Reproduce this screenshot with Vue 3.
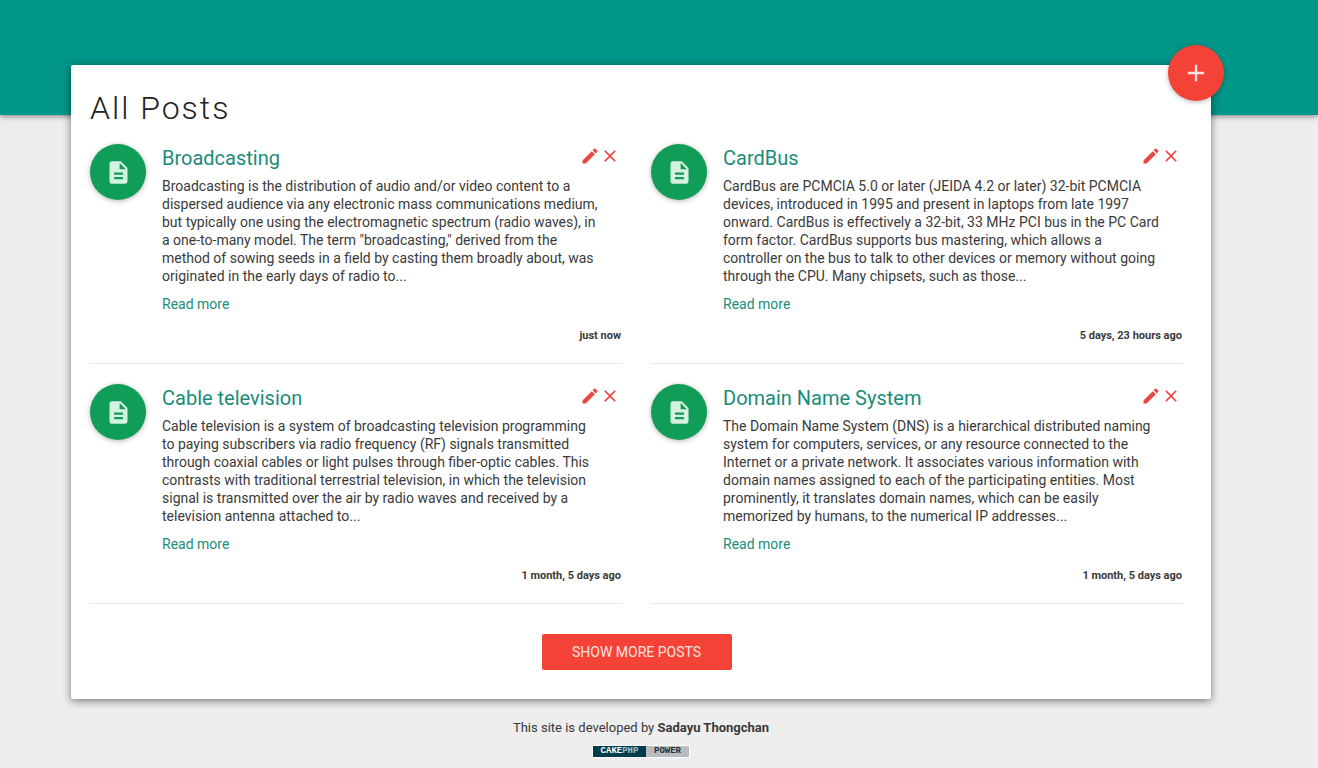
<script setup>
const posts = [
  {
    title: 'Broadcasting',
    body: 'Broadcasting is the distribution of audio and/or video content to a dispersed audience via any electronic mass communications medium, but typically one using the electromagnetic spectrum (radio waves), in a one-to-many model. The term "broadcasting," derived from the method of sowing seeds in a field by casting them broadly about, was originated in the early days of radio to...',
    time: 'just now',
  },
  {
    title: 'CardBus',
    body: 'CardBus are PCMCIA 5.0 or later (JEIDA 4.2 or later) 32-bit PCMCIA devices, introduced in 1995 and present in laptops from late 1997 onward. CardBus is effectively a 32-bit, 33 MHz PCI bus in the PC Card form factor. CardBus supports bus mastering, which allows a controller on the bus to talk to other devices or memory without going through the CPU. Many chipsets, such as those...',
    time: '5 days, 23 hours ago',
  },
  {
    title: 'Cable television',
    body: 'Cable television is a system of broadcasting television programming to paying subscribers via radio frequency (RF) signals transmitted through coaxial cables or light pulses through fiber-optic cables. This contrasts with traditional terrestrial television, in which the television signal is transmitted over the air by radio waves and received by a television antenna attached to...',
    time: '1 month, 5 days ago',
  },
  {
    title: 'Domain Name System',
    body: 'The Domain Name System (DNS) is a hierarchical distributed naming system for computers, services, or any resource connected to the Internet or a private network. It associates various information with domain names assigned to each of the participating entities. Most prominently, it translates domain names, which can be easily memorized by humans, to the numerical IP addresses...',
    time: '1 month, 5 days ago',
  },
]
</script>

<template>
  <div class="page">
    <header class="banner"></header>
    <div class="wrap">
      <main class="card">
        <button class="fab" type="button" aria-label="Add post">
          <svg width="28" height="28" viewBox="0 0 24 24"><path d="M19 13h-6v6h-2v-6H5v-2h6V5h2v6h6v2z" /></svg>
        </button>
        <h1>All Posts</h1>
        <div class="posts">
          <article v-for="post in posts" :key="post.title" class="post">
            <div class="badge">
              <svg width="27" height="27" viewBox="0 0 24 24"><path d="M14 2H6c-1.1 0-1.99.9-1.99 2L4 20c0 1.1.89 2 1.99 2H18c1.1 0 2-.9 2-2V8l-6-6zm2 16H8v-2h8v2zm0-4H8v-2h8v2zm-3-5V3.500L18.500 9H13z" /></svg>
            </div>
            <div class="content">
              <div class="head">
                <h2><a href="#">{{ post.title }}</a></h2>
                <div class="actions">
                  <button type="button" aria-label="Edit post">
                    <svg width="20" height="20" viewBox="0 0 24 24"><path d="M3 17.250V21h3.750L17.810 9.940l-3.750-3.750L3 17.250zM20.710 7.040c.39-.39.39-1.020 0-1.410l-2.340-2.340c-.39-.39-1.020-.39-1.410 0l-1.830 1.830 3.750 3.750 1.830-1.830z" /></svg>
                  </button>
                  <button type="button" aria-label="Delete post">
                    <svg width="20" height="20" viewBox="0 0 24 24"><path d="M19 6.410L17.590 5 12 10.590 6.410 5 5 6.410 10.590 12 5 17.590 6.410 19 12 13.410 17.590 19 19 17.590 13.410 12z" /></svg>
                  </button>
                </div>
              </div>
              <p class="body">{{ post.body }}</p>
              <a class="more" href="#">Read more</a>
              <time>{{ post.time }}</time>
            </div>
          </article>
        </div>
        <button class="load" type="button">SHOW MORE POSTS</button>
      </main>
      <footer>
        <p>This site is developed by <b>Sadayu Thongchan</b></p>
        <a class="cake" href="#"><span class="dark">CAKE<i>PHP</i></span><span class="light">POWER</span></a>
      </footer>
    </div>
  </div>
</template>

<style>
body {
  background: #eee;
}
</style>

<style scoped>
.page {
  font-family: Roboto, sans-serif;
  font-size: 14px;
  line-height: 18px;
  color: #3a3a3a;
}
.banner {
  height: 115px;
  background: #009688;
  box-shadow: 0 1px 6px rgba(0, 0, 0, 0.5);
}
.wrap {
  margin: -50px 107px 0 71px;
  position: relative;
}
.card {
  position: relative;
  box-sizing: border-box;
  padding: 23px 28px 29px 19px;
  background: #fff;
  border-radius: 2px;
  box-shadow: 0 2px 8px rgba(0, 0, 0, 0.5);
  display: flex;
  flex-direction: column;
}
button {
  border: 0;
  padding: 0;
  cursor: pointer;
  font-family: inherit;
}
a {
  color: #1a8c78;
  text-decoration: none;
}
.fab {
  position: absolute;
  top: -20px;
  right: -13px;
  width: 56px;
  height: 56px;
  border-radius: 50%;
  background: #f44336;
  display: flex;
  align-items: center;
  justify-content: center;
  box-shadow: 0 1px 5px rgba(0, 0, 0, 0.3);
}
.fab svg {
  fill: #fde3e1;
}
h1 {
  margin: 0 0 16px;
  font-size: 32px;
  line-height: 40px;
  font-weight: 300;
  letter-spacing: 2px;
  color: #222;
}
.posts {
  display: grid;
  grid-template-columns: 1fr 1fr;
  gap: 20px 29px;
}
.post {
  display: flex;
  gap: 16px;
  border-bottom: 1px solid #eaeaea;
  padding-bottom: 18px;
}
.badge {
  flex: none;
  width: 56px;
  height: 56px;
  border-radius: 50%;
  background: #0f9d58;
  display: flex;
  align-items: center;
  justify-content: center;
  box-shadow: 0 1px 5px rgba(0, 0, 0, 0.3);
}
.badge svg {
  fill: #d5f1e1;
}
.content {
  flex: 1;
  display: flex;
  flex-direction: column;
}
.head {
  display: flex;
  justify-content: space-between;
}
h2 {
  margin: 2px 0 7px;
  font-size: 20px;
  line-height: 24px;
  font-weight: 400;
}
.actions {
  display: flex;
  align-items: flex-start;
  padding: 2px 2px 0 0;
}
.actions button {
  display: flex;
  background: none;
}
.actions svg {
  fill: #ea4540;
}
.body {
  margin: 0 22px 10px 0;
}
.more {
  align-self: flex-start;
}
time {
  align-self: flex-end;
  margin: 14px 1px 0 0;
  font-size: 11px;
  font-weight: 700;
}
.load {
  align-self: center;
  width: 190px;
  height: 36px;
  margin-top: 30px;
  border-radius: 2px;
  background: #f44336;
  color: #fde3e1;
  font-size: 14px;
}
footer {
  text-align: center;
  padding-top: 20px;
  font-size: 13px;
}
footer p {
  margin: 0 0 8px;
}
.cake {
  display: flex;
  width: 96px;
  margin: 0 auto;
  border: 1px solid #fff;
  font: 700 9px/11px "Liberation Mono", monospace;
}
.dark {
  width: 53px;
  background: #003d4c;
  color: #fff;
}
.dark i {
  font-style: normal;
  color: #9fc3cb;
}
.light {
  flex: 1;
  background: #b9bdbf;
  color: #22333b;
}
</style>
